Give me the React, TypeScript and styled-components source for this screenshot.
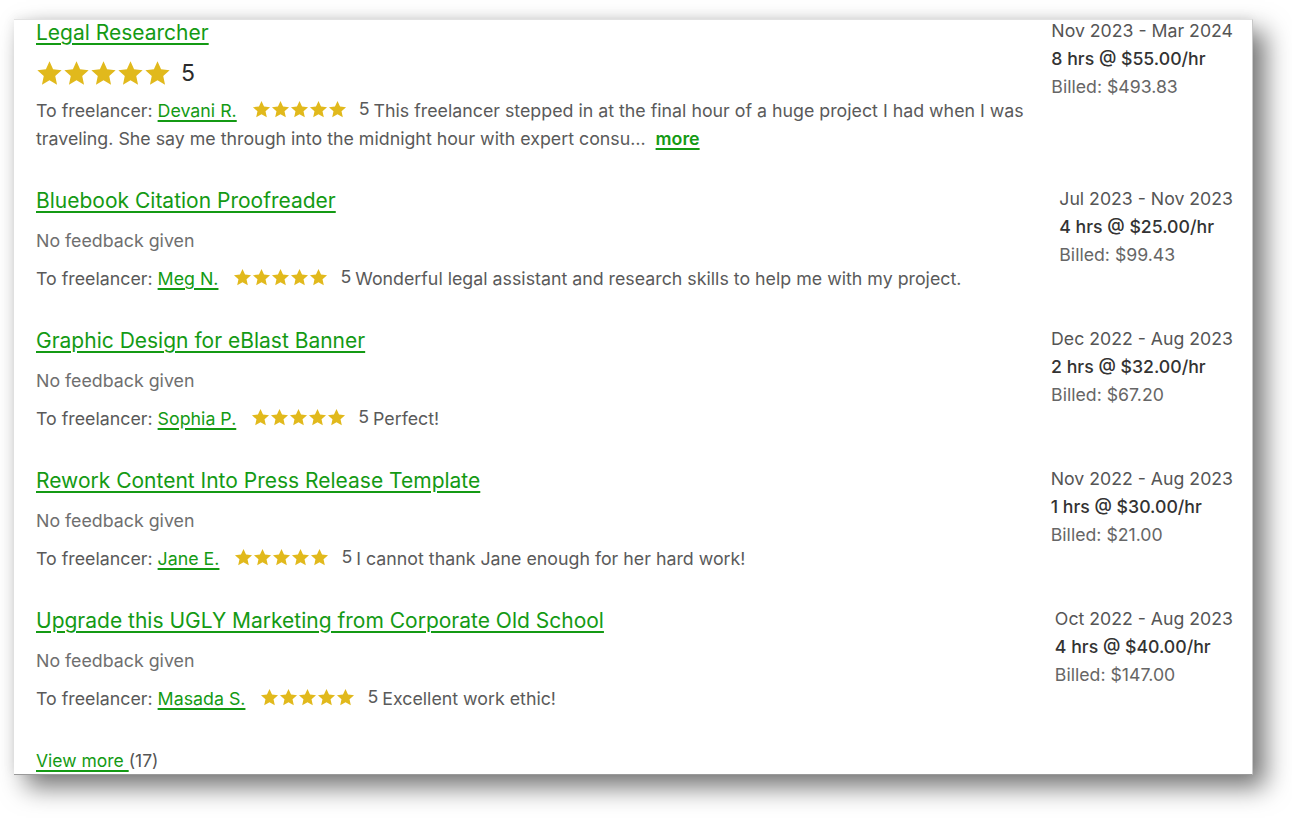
import { createGlobalStyle, styled } from "styled-components"

const GlobalStyle = createGlobalStyle`
  html, body {
    margin: 0;
    padding: 0;
    background: #fff;
  }
  body {
    font-family: Inter, "Liberation Sans", Arial, sans-serif;
    -webkit-font-smoothing: antialiased;
  }
`

type Contract = {
  title: string
  rating?: number
  freelancer: string
  score: number
  review: string
  truncated?: boolean
  period: string
  rate: string
  billed: string
}

const contracts: Contract[] = [
  {
    title: "Legal Researcher",
    rating: 5,
    freelancer: "Devani R.",
    score: 5,
    review:
      "This freelancer stepped in at the final hour of a huge project I had when I was traveling. She say me through into the midnight hour with expert consu…",
    truncated: true,
    period: "Nov 2023 - Mar 2024",
    rate: "8 hrs @ $55.00/hr",
    billed: "Billed: $493.83",
  },
  {
    title: "Bluebook Citation Proofreader",
    freelancer: "Meg N.",
    score: 5,
    review: "Wonderful legal assistant and research skills to help me with my project.",
    period: "Jul 2023 - Nov 2023",
    rate: "4 hrs @ $25.00/hr",
    billed: "Billed: $99.43",
  },
  {
    title: "Graphic Design for eBlast Banner",
    freelancer: "Sophia P.",
    score: 5,
    review: "Perfect!",
    period: "Dec 2022 - Aug 2023",
    rate: "2 hrs @ $32.00/hr",
    billed: "Billed: $67.20",
  },
  {
    title: "Rework Content Into Press Release Template",
    freelancer: "Jane E.",
    score: 5,
    review: "I cannot thank Jane enough for her hard work!",
    period: "Nov 2022 - Aug 2023",
    rate: "1 hrs @ $30.00/hr",
    billed: "Billed: $21.00",
  },
  {
    title: "Upgrade this UGLY Marketing from Corporate Old School",
    freelancer: "Masada S.",
    score: 5,
    review: "Excellent work ethic!",
    period: "Oct 2022 - Aug 2023",
    rate: "4 hrs @ $40.00/hr",
    billed: "Billed: $147.00",
  },
]

const Star = ({ size }: { size: number }) => (
  <svg width={size} height={size} viewBox="0 0 24 24" aria-hidden="true" style={{ display: "block" }}>
    <path
      d="M12 1.2l3.2 7.1 7.6.8-5.7 5.2 1.6 7.6L12 18l-6.7 3.9 1.6-7.6-5.7-5.2 7.6-.8z"
      fill="#e1b91c"
    />
  </svg>
)

const Stars = ({ size }: { size: number }) => (
  <StarRow>
    {[0, 1, 2, 3, 4].map((i) => (
      <Star key={i} size={size} />
    ))}
  </StarRow>
)

const App = () => {
  return (
    <>
      <GlobalStyle />
      <Page>
        <Card>
          {contracts.map((c) => (
            <Entry key={c.title}>
              <Main>
                <Title href="#">{c.title}</Title>
                {c.rating ? (
                  <BigRating>
                    <Stars size={27} />
                    <BigScore>{c.rating}</BigScore>
                  </BigRating>
                ) : (
                  <NoFeedback>No feedback given</NoFeedback>
                )}
                <Review>
                  To freelancer: <NameLink href="#">{c.freelancer}</NameLink>
                  <InlineStars>
                    <Stars size={19} />
                  </InlineStars>
                  <Score>{c.score}</Score>
                  {c.review}
                  {c.truncated && <MoreLink href="#">more</MoreLink>}
                </Review>
              </Main>
              <Meta>
                <Period>{c.period}</Period>
                <Rate>{c.rate}</Rate>
                <Billed>{c.billed}</Billed>
              </Meta>
            </Entry>
          ))}
          <Footer>
            <ViewMore href="#">View more </ViewMore>(17)
          </Footer>
        </Card>
      </Page>
    </>
  )
}

const Page = styled.div`
  padding: 19px 0 0 14px;
  height: 799px;
`

const Card = styled.div`
  width: 1239px;
  height: 756px;
  box-sizing: border-box;
  background: #fff;
  border-top: 1px solid #e2e2e2;
  border-bottom: 1px solid #9a9a9a;
  border-right: 1px solid #c8c8c8;
  box-shadow: 12px 12px 24px rgba(0, 0, 0, 0.55), -2px -2px 10px rgba(0, 0, 0, 0.06);
  padding: 1px 19px 0 22px;
  overflow: hidden;
`

const Entry = styled.div`
  display: flex;
  justify-content: space-between;
  align-items: flex-start;
  margin-bottom: 36px;
`

const Main = styled.div`
  display: flex;
  flex-direction: column;
  align-items: flex-start;
  width: 1005px;
`

const Title = styled.a`
  font-size: 21px;
  line-height: 24px;
  color: #149a14;
  text-decoration: underline;
  text-decoration-thickness: 2px;
  text-underline-offset: 3px;
  margin-bottom: 14px;
`

const BigRating = styled.div`
  display: flex;
  align-items: center;
  height: 28px;
  gap: 10px;
  margin-bottom: 10px;
`

const BigScore = styled.span`
  font-size: 23px;
  color: #2b2b2b;
`

const NoFeedback = styled.div`
  font-size: 17.8px;
  line-height: 28px;
  color: #6f6f6f;
  margin-bottom: 10px;
`

const Review = styled.div`
  font-size: 17.8px;
  line-height: 28px;
  color: #5a5a5a;
`

const NameLink = styled.a`
  color: #149a14;
  text-decoration: underline;
  text-decoration-thickness: 1.5px;
  text-underline-offset: 3px;
`

const InlineStars = styled.span`
  display: inline-flex;
  height: 19px;
  line-height: 0;
  vertical-align: -2px;
  margin: 0 12px 0 15px;
`

const StarRow = styled.span`
  display: inline-flex;
`

const Score = styled.span`
  position: relative;
  top: -2px;
  margin-right: 4px;
`

const MoreLink = styled.a`
  color: #149a14;
  font-weight: 600;
  margin-left: 10px;
  text-decoration: underline;
  text-decoration-thickness: 1.5px;
  text-underline-offset: 3px;
`

const Meta = styled.div`
  display: flex;
  flex-direction: column;
  flex-shrink: 0;
  margin-top: -4px;
  font-size: 17.7px;
  line-height: 28px;
  white-space: nowrap;
`

const Period = styled.div`
  color: #555;
`

const Rate = styled.div`
  color: #333;
  font-weight: 500;
`

const Billed = styled.div`
  color: #666;
`

const Footer = styled.div`
  font-size: 17.5px;
  line-height: 24px;
  color: #555;
`

const ViewMore = styled.a`
  color: #149a14;
  text-decoration: underline;
  text-decoration-thickness: 1.5px;
  text-underline-offset: 3px;
`

export default App
